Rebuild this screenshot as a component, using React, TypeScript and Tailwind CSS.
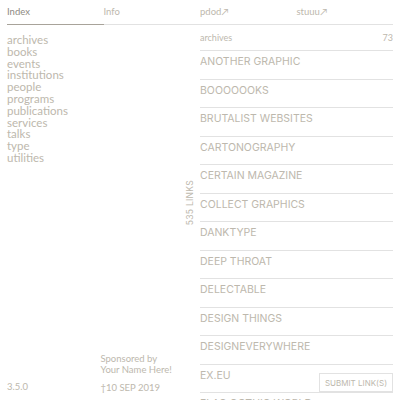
import React from "react";

const categories = [
  "archives",
  "books",
  "events",
  "institutions",
  "people",
  "programs",
  "publications",
  "services",
  "talks",
  "type",
  "utilities",
];

const links = [
  "ANOTHER GRAPHIC",
  "BOOOOOOKS",
  "BRUTALIST WEBSITES",
  "CARTONOGRAPHY",
  "CERTAIN MAGAZINE",
  "COLLECT GRAPHICS",
  "DANKTYPE",
  "DEEP THROAT",
  "DELECTABLE",
  "DESIGN THINGS",
  "DESIGNEVERYWHERE",
  "EX.EU",
  "FLAG GOTHIC WORLD",
];

export default function App() {
  return (
    <div
      className="relative h-[400px] w-[400px] overflow-hidden bg-white px-[7px] text-[#bdb8ad]"
      style={{ fontFamily: "Lato, 'Noto Sans', sans-serif" }}
    >
      <div className="grid h-full grid-cols-4 grid-rows-[400px]">
        {/* Column 1 */}
        <div className="flex min-h-0 flex-col">
          <div className="flex h-[25px] shrink-0 items-center border-b border-[#a8a39a] text-[9.5px] text-[#8e8a82]">
            Index
          </div>
          <ul className="mt-[9px] text-[11.5px] leading-[11.8px]">
            {categories.map((c) => (
              <li key={c}>{c}</li>
            ))}
          </ul>
          <div className="mt-auto mb-[7px] text-[9.5px] leading-[12px]">3.5.0</div>
        </div>

        {/* Column 2 */}
        <div className="flex min-h-0 flex-col">
          <div className="flex h-[25px] shrink-0 items-center border-b border-[#e2e2e2] text-[9.5px]">
            Info
          </div>
          <div className="mt-[155px] flex justify-end pr-[5px]">
            <span
              className="rotate-180 text-[8.5px] leading-[10px] tracking-[0.3px] [writing-mode:vertical-rl]"
              style={{ fontFamily: "Inter, sans-serif" }}
            >
              535 LINKS
            </span>
          </div>
          <div className="mt-auto mb-[7px] ml-[-3px] text-[9.5px] leading-[11px]">
            <div>Sponsored by</div>
            <div>Your Name Here!</div>
            <div className="mt-[7px]">†10 SEP 2019</div>
          </div>
        </div>

        {/* Columns 3-4 */}
        <div className="col-span-2 flex min-h-0 flex-col overflow-hidden">
          <div className="grid h-[25px] shrink-0 grid-cols-2 border-b border-[#e2e2e2] text-[9.5px]">
            <div className="flex items-center">pdod↗</div>
            <div className="flex items-center">stuuu↗</div>
          </div>
          <div className="flex h-[26px] shrink-0 items-center justify-between border-b border-[#e2e2e2] text-[9px]">
            <span>archives</span>
            <span>73</span>
          </div>
          <ul style={{ fontFamily: "Inter, sans-serif" }}>
            {links.map((l) => (
              <li
                key={l}
                className="h-[28.5px] shrink-0 border-b border-[#e2e2e2] pt-[4px] text-[10.5px] leading-[14px]"
              >
                {l}
              </li>
            ))}
          </ul>
        </div>
      </div>

      <button
        className="absolute right-[7px] bottom-[8px] flex h-[19px] w-[74px] items-center justify-center border border-[#e2e2e2] bg-white text-[8px] text-[#bdb8ad]"
        style={{ fontFamily: "Inter, sans-serif" }}
      >
        SUBMIT LINK(S)
      </button>
    </div>
  );
}
